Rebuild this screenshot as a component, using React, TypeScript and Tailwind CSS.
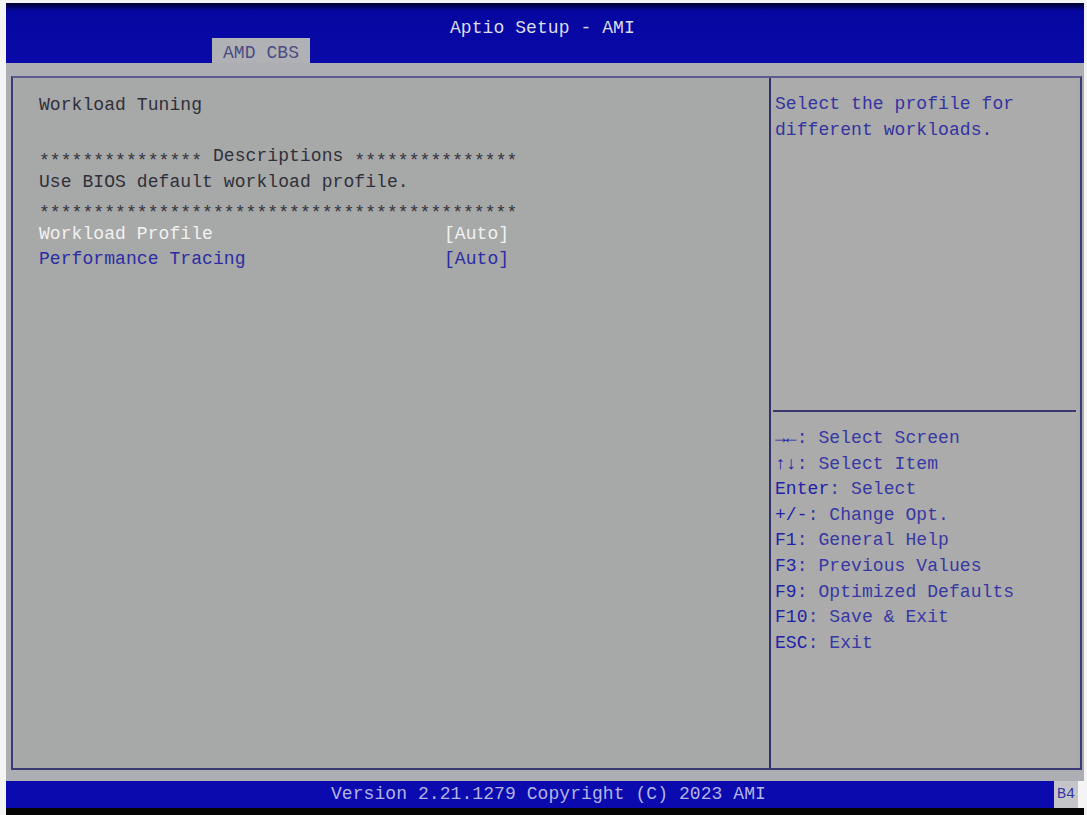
import React from "react";

const help: [string, string][] = [
  ["→←", ": Select Screen"],
  ["↑↓", ": Select Item"],
  ["Enter", ": Select"],
  ["+/-", ": Change Opt."],
  ["F1", ": General Help"],
  ["F3", ": Previous Values"],
  ["F9", ": Optimized Defaults"],
  ["F10", ": Save & Exit"],
  ["ESC", ": Exit"],
];

function Stars({ n }: { n: number }) {
  return <span className="relative top-[5px] text-[#34343e]">{"*".repeat(n)}</span>;
}

export default function App() {
  return (
    <div className="w-[1087px] h-[815px] bg-[#f4f4f4] overflow-hidden font-['Liberation_Mono','DejaVu_Sans_Mono',monospace] text-[18px] tracking-[0.07px]">
      <div className="ml-[6px] mt-[3px] w-[1078px] h-[812px] flex flex-col">
        {/* Header */}
        <div className="h-[60px] flex flex-col bg-[linear-gradient(to_bottom,#00002c_0px,#0606a0_8px,#0a0aa8_100%)]">
          <div className="pt-[15px] leading-[20px] h-[35px] pl-[444px] text-[#dcdce8] whitespace-pre">Aptio Setup - AMI</div>
          <div className="flex">
            <div className="ml-[206px] w-[98px] h-[25px] bg-[#b0b1b4] text-[#4c4c84] pt-[4px] leading-[22px] pl-[11px] whitespace-pre">AMD CBS</div>
          </div>
        </div>
        {/* Body */}
        <div className="h-[718px] bg-[#adaeb3] pt-[13px] pl-[5px]">
          <div className="w-[1071px] h-[694px] border-2 border-[#3a3a74] border-t-[#5c5c8c] flex bg-[#a7a8a8]">
            <div className="w-[756px] pt-[15px] pl-[26px] leading-[25.7px] whitespace-pre text-[#30303a]">
              <div>Workload Tuning</div>
              <div>&nbsp;</div>
              <div>
                <Stars n={15} /> Descriptions <Stars n={15} />
              </div>
              <div>Use BIOS default workload profile.</div>
              <div>
                <Stars n={44} />
              </div>
              <div className="flex text-[#f2f2f2]">
                <span className="w-[405px]">Workload Profile</span>
                <span>[Auto]</span>
              </div>
              <div className="flex text-[#2c2ca4]">
                <span className="w-[405px]">Performance Tracing</span>
                <span>[Auto]</span>
              </div>
            </div>
            <div className="w-[309px] border-l-2 border-[#30306c] bg-[#aaabaa] flex flex-col">
              <div className="h-[332px] pt-[14px] pl-[4px] leading-[25.7px] whitespace-pre text-[#3434a0]">
                <div>Select the profile for</div>
                <div>different workloads.</div>
              </div>
              <div className="mx-[2px] h-[2px] bg-[#38386c]" />
              <div className="pt-[14px] pl-[4px] leading-[25.6px] whitespace-pre text-[#3838a4]">
                {help.map(([k, d]) => (
                  <div key={k}>
                    <span className="text-[#2222a8]">{k}</span>
                    {d}
                  </div>
                ))}
              </div>
            </div>
          </div>
        </div>
        {/* Footer */}
        <div className="h-[27px] flex">
          <div className="w-[1048px] bg-[#0a0aae] text-[#b4b4e4] pl-[325px] leading-[27px] whitespace-pre">
            Version 2.21.1279 Copyright (C) 2023 AMI
          </div>
          <div className="w-[24px] bg-[#c4c5c8] text-[#3434a4] text-[15px] leading-[27px] text-center tracking-[0px]">B4</div>
        </div>
        <div className="h-[7px] bg-[#050505]" />
      </div>
    </div>
  );
}
